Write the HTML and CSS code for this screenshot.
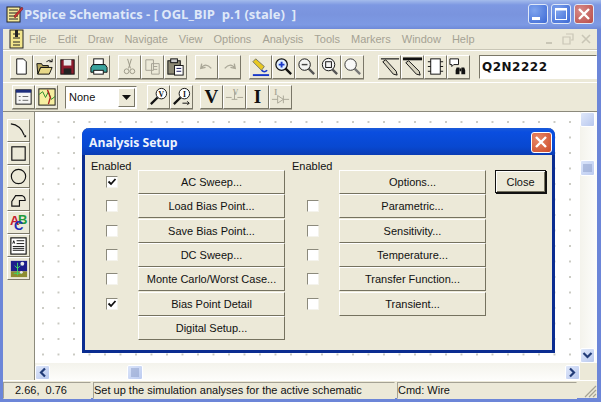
FILE: index.html
```html
<!DOCTYPE html>
<html lang="en">
<head>
    <meta charset="UTF-8">
    <meta name="viewport" content="width=device-width, initial-scale=1.0">
    <title>PSpice Schematics</title>
    <link rel="stylesheet" href="styles.css">
</head>
<body>
    <div class="window">
        <!-- title bar -->
        <div class="titlebar">
            <svg class="app-icon" width="18" height="18" viewBox="0 0 18 18"><rect x="1" y="2" width="13" height="15" fill="#f3e79a" stroke="#222"/><path d="M3 5h9M3 8h9M3 11h9M3 14h9" stroke="#222"/><path d="M8 11l8-9 1 2-8 9z" fill="#c33" stroke="#611" stroke-width=".5"/></svg>
            <div class="title-text">PSpice Schematics - [ OGL_BIP  p.1 (stale)  ]</div>
            <div class="win-btn"><svg width="20" height="20" viewBox="0 0 20 20"><rect x="4" y="13" width="8" height="3" fill="#fff"/></svg></div>
            <div class="win-btn"><svg width="20" height="20" viewBox="0 0 20 20"><rect x="4.500" y="4.500" width="11" height="11" fill="none" stroke="#fff"/><rect x="4" y="4" width="12" height="2.500" fill="#fff"/></svg></div>
            <div class="win-btn close"><svg width="20" height="20" viewBox="0 0 20 20"><path d="M5 5l10 10M15 5L5 15" stroke="#fff" stroke-width="2.400"/></svg></div>
        </div>

        <!-- menu -->
        <div class="menubar">
            <svg class="doc-icon" width="18" height="20" viewBox="0 0 18 20"><rect x="2" y="1" width="13" height="18" fill="#f3e68c" stroke="#222"/><path d="M5 5h7M5 9h7M5 13h7M5 16h7" stroke="#222"/><rect x="7" y="1" width="3" height="7" fill="#222"/></svg>
            <span class="menu">File</span>
            <span class="menu">Edit</span>
            <span class="menu">Draw</span>
            <span class="menu">Navigate</span>
            <span class="menu">View</span>
            <span class="menu">Options</span>
            <span class="menu">Analysis</span>
            <span class="menu">Tools</span>
            <span class="menu">Markers</span>
            <span class="menu">Window</span>
            <span class="menu">Help</span>
            <div class="mdi-btns">
                <svg width="14" height="14" viewBox="0 0 14 14"><path d="M3 11h6" stroke="#c9c6b6" stroke-width="2"/></svg>
                <svg width="14" height="14" viewBox="0 0 14 14"><path d="M5 2h7v6h-2M2 5h7v7H2z" fill="none" stroke="#c9c6b6" stroke-width="1.200"/></svg>
                <svg width="14" height="14" viewBox="0 0 14 14"><path d="M3 3l8 8M11 3l-8 8" stroke="#c9c6b6" stroke-width="1.600"/></svg>
            </div>
        </div>

        <!-- main toolbar -->
        <div class="toolbar top">
            <div class="tool first"><svg viewBox="0 0 22 22"><path d="M6 3h7l3 3v13H6z" fill="#fff" stroke="#111"/></svg></div>
            <div class="tool"><svg viewBox="0 0 22 22"><path d="M3 8h5l1 2h6v2H7l-3 7z" fill="#b8a860" stroke="#111"/><path d="M4 19l3-7h12l-3 7z" fill="#e8d888" stroke="#111"/><path d="M13 6q3-3 6 0M19 3v3h-3" fill="none" stroke="#111"/></svg></div>
            <div class="tool"><svg viewBox="0 0 22 22"><rect x="4" y="4" width="14" height="15" fill="#8c1c2c" stroke="#111"/><rect x="7" y="4" width="8" height="6" fill="#e8e8e8"/><rect x="7" y="13" width="8" height="6" fill="#222"/></svg></div>
            <div class="tool sep"><svg viewBox="0 0 22 22"><rect x="6" y="3" width="10" height="6" fill="#fff" stroke="#111"/><path d="M5 9h13l2 3v5H3v-5z" fill="#3aa39c" stroke="#111"/><rect x="6" y="15" width="10" height="4" fill="#fff" stroke="#111"/></svg></div>
            <div class="tool sep"><svg viewBox="0 0 22 22"><path d="M9 3l3 10M13 3l-3 10" stroke="#9a9786"/><circle cx="8" cy="16" r="2.500" fill="none" stroke="#9a9786"/><circle cx="14" cy="16" r="2.500" fill="none" stroke="#9a9786"/></svg></div>
            <div class="tool"><svg viewBox="0 0 22 22"><path d="M4 4h8v11H4zM10 8h8v11h-8z" fill="#ece9d8" stroke="#a5a294"/><path d="M12 11h4M12 14h4" stroke="#a5a294"/></svg></div>
            <div class="tool"><svg viewBox="0 0 22 22"><rect x="3" y="5" width="13" height="14" fill="#8c8874" stroke="#111"/><rect x="6" y="3" width="7" height="4" fill="#ccc" stroke="#111"/><rect x="10" y="10" width="9" height="10" fill="#fff" stroke="#111"/><path d="M12 13h5M12 16h5" stroke="#115"/></svg></div>
            <div class="tool sep"><svg viewBox="0 0 22 22"><path d="M6 8l-1 5 5-1M5 13q5-7 11 0" fill="none" stroke="#aaa797" stroke-width="1.400"/></svg></div>
            <div class="tool"><svg viewBox="0 0 22 22"><path d="M16 8l1 5-5-1M17 13q-5-7-11 0" fill="none" stroke="#aaa797" stroke-width="1.400"/></svg></div>
            <div class="tool sep"><svg viewBox="0 0 22 22"><path d="M3 6l3-3 9 8-3 4z" fill="#e8c820" stroke="#776"/><path d="M12 15q3 3 6 0" stroke="#1838c8" fill="none" stroke-width="1.600"/><path d="M3 20h17" stroke="#1838c8" stroke-width="2"/></svg></div>
            <div class="tool"><svg viewBox="0 0 22 22"><circle cx="9" cy="9" r="6" fill="#dfeeff" stroke="#111" stroke-width="1.300"/><path d="M6 9h6M9 6v6" stroke="#1838c8" stroke-width="2"/><path d="M13 13l6 6" stroke="#111" stroke-width="2.400"/></svg></div>
            <div class="tool"><svg viewBox="0 0 22 22"><circle cx="9" cy="9" r="6" fill="#f4f4f4" stroke="#111"/><path d="M6 9h6" stroke="#444" stroke-width="1.500"/><path d="M13 13l6 6" stroke="#555" stroke-width="2.400"/></svg></div>
            <div class="tool"><svg viewBox="0 0 22 22"><circle cx="10" cy="9" r="6.500" fill="#f4f4f4" stroke="#111"/><rect x="7" y="6" width="6" height="6" fill="none" stroke="#111"/><path d="M14 14l5 5" stroke="#555" stroke-width="2.400"/></svg></div>
            <div class="tool"><svg viewBox="0 0 22 22"><circle cx="9" cy="9" r="6" fill="#f8f8f8" stroke="#333"/><path d="M13 13l6 6" stroke="#777" stroke-width="2.400"/></svg></div>
            <div class="tool sep wide-sep"><svg viewBox="0 0 22 22"><path d="M2 3h19" stroke="#111" stroke-width="1.200"/><path d="M4 6l3-2 11 12 1 4-4-1z" fill="#d8d4c0" stroke="#111"/></svg></div>
            <div class="tool"><svg viewBox="0 0 22 22"><path d="M1 3h20" stroke="#111" stroke-width="3"/><path d="M4 7l3-2 11 11 1 4-4-1z" fill="#d8d4c0" stroke="#111"/></svg></div>
            <div class="tool"><svg viewBox="0 0 22 22"><rect x="6" y="3" width="10" height="16" fill="#fff" stroke="#111"/><path d="M3 6h3M3 11h3M3 16h3M16 6h3M16 11h3M16 16h3" stroke="#111"/></svg></div>
            <div class="tool"><svg viewBox="0 0 22 22"><path d="M2 3h9v6H6l-2 2V9H2z" fill="#fff" stroke="#111"/><path d="M9 12h3v7H8v-4zM14 12h3l1 3v4h-4z" fill="#111"/><rect x="12" y="13" width="2" height="3" fill="#111"/></svg></div>
            <input class="part-box" value="Q2N2222">
        </div>

        <!-- second toolbar -->
        <div class="toolbar bottom">
            <div class="tool first2"><svg viewBox="0 0 22 22"><rect x="3" y="4" width="16" height="15" fill="#f4f4f4" stroke="#111"/><rect x="3" y="4" width="16" height="3" fill="#1c2c7c"/><path d="M6 11h2M10 11h6M6 15h2M10 15h6" stroke="#666"/></svg></div>
            <div class="tool"><svg viewBox="0 0 22 22"><rect x="3" y="3" width="17" height="17" fill="#f6eea0" stroke="#111"/><path d="M3 9l4-3 3 6 3-6 3 8 4-3" fill="none" stroke="#2a8a2a"/><path d="M12 4l3 8-2 7" fill="none" stroke="#b02020" stroke-width="1.400"/></svg></div>
            <div class="select-box"><span class="select-val">None</span><span class="select-arrow"><svg width="9" height="5" viewBox="0 0 9 5"><path d="M0 0h9L4.500 5z" fill="#111"/></svg></span></div>
            <div class="tool"><svg viewBox="0 0 22 22"><circle cx="14" cy="8" r="5.500" fill="#fff" stroke="#111"/><text x="14" y="11" class="tool-mini">V</text><path d="M10 12l-7 7" stroke="#111" stroke-width="2.400"/></svg></div>
            <div class="tool"><svg viewBox="0 0 22 22"><circle cx="14" cy="8" r="5.500" fill="#fff" stroke="#111"/><text x="14" y="11" class="tool-mini">I</text><path d="M10 12l-7 7" stroke="#111" stroke-width="2.400"/><path d="M12 18h7M17 16l2 2-2 2" fill="none" stroke="#111"/></svg></div>
            <div class="tool gap7"><svg viewBox="0 0 22 22"><text x="11" y="18" class="tool-big">V</text></svg></div>
            <div class="tool"><svg viewBox="0 0 22 22"><text x="12" y="9" class="tool-small">V</text><path d="M2 12h6M11 6v8M8 14h6M14 12h6" fill="none" stroke="#aaa797"/></svg></div>
            <div class="tool"><svg viewBox="0 0 22 22"><text x="11" y="18" class="tool-big">I</text></svg></div>
            <div class="tool"><svg viewBox="0 0 22 22"><text x="6" y="9" class="tool-small">I</text><path d="M2 14h6M14 14h6M8 10v8l6-4zM14 10v8" fill="none" stroke="#aaa797"/></svg></div>
        </div>

        <!-- workspace -->
        <div class="workspace">
            <div class="toolbox">
                <div class="tool"><svg viewBox="0 0 22 22"><path d="M3 4q10 1 14 12" fill="none" stroke="#111" stroke-width="1.200"/><rect x="17" y="16" width="2" height="2" fill="#111"/></svg></div>
                <div class="tool"><svg viewBox="0 0 22 22"><rect x="4" y="4" width="14" height="14" fill="none" stroke="#111" stroke-width="1.200"/></svg></div>
                <div class="tool"><svg viewBox="0 0 22 22"><circle cx="11" cy="11" r="7.500" fill="none" stroke="#111" stroke-width="1.200"/></svg></div>
                <div class="tool"><svg viewBox="0 0 22 22"><path d="M4 18v-5l4-6h7q3 1 3 5h-6v6z" fill="none" stroke="#111" stroke-width="1.200"/></svg></div>
                <div class="tool abc"><span class="abc-a">A</span><span class="abc-b">B</span><span class="abc-c">C</span></div>
                <div class="tool"><svg viewBox="0 0 22 22"><rect x="3" y="3" width="16" height="17" fill="#fff" stroke="#111" stroke-width="1.200"/><path d="M9 6h8M9 9h8M5 12h12M5 14h12M5 16h12" stroke="#111"/><path d="M5 9l1-3 1 3" fill="none" stroke="#111"/></svg></div>
                <div class="tool"><svg viewBox="0 0 22 22"><rect x="3" y="3" width="17" height="11" fill="#1c1c8c"/><rect x="3" y="14" width="17" height="6" fill="#8c8c30"/><path d="M10 5v13M7 8l3 3 3-3M6 16h8" stroke="#3cd868" fill="none"/><circle cx="15" cy="6" r="2" fill="#e8e8e8"/><circle cx="14" cy="15" r="1.500" fill="#e8e8e8"/></svg></div>
            </div>

            <div class="canvas-area">
                <div class="canvas"></div>
                <div class="vscroll">
                    <div class="sb-btn"></div>
                    <div class="sb-track"><div class="vthumb"><svg width="9" height="8" viewBox="0 0 9 8"><path d="M0 1h9M0 3h9M0 5h9M0 7h9" stroke="#8a9cc8"/></svg></div></div>
                    <div class="sb-btn"><svg width="11" height="9" viewBox="0 0 11 9"><path d="M1.500 2l4 4 4-4" fill="none" stroke="#223c78" stroke-width="2.200"/></svg></div>
                </div>
                <div class="hscroll">
                    <div class="sb-btn"><svg width="9" height="11" viewBox="0 0 9 11"><path d="M7 1.500l-4 4 4 4" fill="none" stroke="#223c78" stroke-width="2.200"/></svg></div>
                    <div class="sb-track"><div class="hthumb"><svg width="8" height="9" viewBox="0 0 8 9"><path d="M1 0v9M3 0v9M5 0v9M7 0v9" stroke="#8a9cc8"/></svg></div></div>
                    <div class="sb-btn"><svg width="9" height="11" viewBox="0 0 9 11"><path d="M2 1.500l4 4-4 4" fill="none" stroke="#223c78" stroke-width="2.200"/></svg></div>
                </div>
                <div class="sb-corner"></div>
            </div>

            <!-- Analysis Setup dialog -->
            <div class="dialog">
                <div class="dlg-title">
                    <span>Analysis Setup</span>
                    <div class="dlg-close"><svg width="20" height="20" viewBox="0 0 20 20"><path d="M5 5l10 10M15 5L5 15" stroke="#fff" stroke-width="2.400"/></svg></div>
                </div>
                <div class="dlg-body">
                    <div class="dlg-col">
                        <div class="enabled">Enabled</div>
                        <div class="dlg-row"><span class="check"><svg width="10" height="10" viewBox="0 0 10 10"><path d="M1.500 4.500l2.500 2.500 4.500-5" fill="none" stroke="#111" stroke-width="1.800"/></svg></span><div class="btn">AC Sweep...</div></div>
                        <div class="dlg-row"><span class="check"></span><div class="btn">Load Bias Point...</div></div>
                        <div class="dlg-row"><span class="check"></span><div class="btn">Save Bias Point...</div></div>
                        <div class="dlg-row"><span class="check"></span><div class="btn">DC Sweep...</div></div>
                        <div class="dlg-row"><span class="check"></span><div class="btn">Monte Carlo/Worst Case...</div></div>
                        <div class="dlg-row"><span class="check"><svg width="10" height="10" viewBox="0 0 10 10"><path d="M1.500 4.500l2.500 2.500 4.500-5" fill="none" stroke="#111" stroke-width="1.800"/></svg></span><div class="btn">Bias Point Detail</div></div>
                        <div class="dlg-row"><span class="no-check"></span><div class="btn">Digital Setup...</div></div>
                    </div>
                    <div class="dlg-col">
                        <div class="enabled">Enabled</div>
                        <div class="dlg-row"><span class="no-check"></span><div class="btn">Options...</div></div>
                        <div class="dlg-row"><span class="check"></span><div class="btn">Parametric...</div></div>
                        <div class="dlg-row"><span class="check"></span><div class="btn">Sensitivity...</div></div>
                        <div class="dlg-row"><span class="check"></span><div class="btn">Temperature...</div></div>
                        <div class="dlg-row"><span class="check"></span><div class="btn">Transfer Function...</div></div>
                        <div class="dlg-row"><span class="check"></span><div class="btn">Transient...</div></div>
                    </div>
                    <div class="btn close-btn">Close</div>
                </div>
            </div>
        </div>

        <!-- status bar -->
        <div class="statusbar">
            <div class="pane coords">2.66,  0.76</div>
            <div class="pane msg">Set up the simulation analyses for the active schematic</div>
            <div class="pane cmd">Cmd: Wire</div>
            <div class="grip"><svg width="16" height="16" viewBox="0 0 16 16"><path d="M15 4L4 15M15 8l-7 7M15 12l-3 3" stroke="#a5a294" stroke-width="1.200"/></svg></div>
        </div>
    </div>
</body>
</html>
```

FILE: styles.css
```css
* {
    margin: 0;
    padding: 0;
    box-sizing: border-box;
}

body {
    width: 601px;
    height: 402px;
    overflow: hidden;
    font-family: "Liberation Sans", Arial, sans-serif;
    font-size: 11px;
    color: #111;
}

.window {
    width: 601px;
    height: 402px;
    display: flex;
    flex-direction: column;
    background: #ece9d8;
    border-left: 3px solid #6c86d8;
    border-right: 4px solid #6c86d8;
    border-bottom: 4px solid #6c86d8;
}

/* title bar */
.titlebar {
    flex: none;
    height: 29px;
    margin: 0 -4px 0 -3px;
    padding: 0 7px 2px 6px;
    display: flex;
    align-items: center;
    background: linear-gradient(to bottom, #a4bcec 0, #7d98e2 5px, #7a94de 50%, #7d9ae4 85%, #6f8ad8 100%);
}

.app-icon {
    flex: none;
}

.title-text {
    flex: 1;
    white-space: pre;
    font-family: "Open Sans", sans-serif;
    font-weight: 700;
    font-size: 13px;
    color: #dfe8f8;
}

.win-btn {
    width: 20px;
    height: 20px;
    margin-left: 3px;
    border: 1px solid #dfe8f8;
    border-radius: 3px;
    background: radial-gradient(circle at 30% 30%, #7fa4ee, #3c68d4);
}

.win-btn.close {
    background: radial-gradient(circle at 30% 30%, #d88a88, #b84c48);
}

.win-btn svg, .dlg-close svg {
    display: block;
    margin: -1px;
}

/* menu */
.menubar {
    flex: none;
    height: 21px;
    padding-left: 5px;
    display: flex;
    align-items: center;
    gap: 11px;
    border-bottom: 1px solid #c9c6b6;
}

.doc-icon {
    margin-right: -8px;
}

.menu {
    color: #a5a294;
    font-size: 11px;
}

.mdi-btns {
    margin-left: auto;
    margin-right: 4px;
    display: flex;
    gap: 4px;
}

/* toolbars */
.toolbar {
    flex: none;
    display: flex;
    align-items: center;
    border-top: 1px solid #fff;
}

.toolbar.top {
    height: 32px;
    padding-left: 7px;
}

.toolbar.bottom {
    height: 30px;
    padding-left: 9px;
    border-bottom: 1px solid #8c8a7c;
}

.tool {
    flex: none;
    width: 23px;
    height: 24px;
    background: #ece9d8;
    border: 1px solid;
    border-color: #fff #7a7768 #7a7768 #fff;
    box-shadow: 0 1px 0 #b0ad9e;
}

.tool svg {
    display: block;
    width: 21px;
    height: 21px;
}

.tool.sep {
    margin-left: 8px;
}

.tool.wide-sep {
    margin-left: 14px;
}

.tool-mini, .tool-small, .tool-big {
    font-family: "Liberation Serif", serif;
    font-weight: 700;
    text-anchor: middle;
}

.tool-mini {
    font-size: 8px;
    fill: #111;
}

.tool-small {
    font-size: 8px;
    fill: #aaa797;
}

.tool-big {
    font-size: 20px;
    fill: #111;
}

.part-box {
    flex: none;
    width: 118px;
    height: 24px;
    margin-left: 9px;
    padding-left: 2px;
    border: 1px solid;
    border-color: #7a7768 #fff #fff #7a7768;
    font-family: "DejaVu Sans", sans-serif;
    font-weight: 700;
    font-size: 12px;
    letter-spacing: .5px;
    color: #111;
}

.select-box {
    flex: none;
    width: 72px;
    height: 23px;
    margin-left: 7px;
    margin-right: 10px;
    padding: 1px;
    display: flex;
    background: #fff;
    border: 1px solid;
    border-color: #7a7768 #fff #fff #7a7768;
}

.select-val {
    flex: 1;
    padding: 3px 2px;
    font-size: 11px;
}

.select-arrow {
    width: 17px;
    display: flex;
    align-items: center;
    justify-content: center;
    background: #ece9d8;
    border: 1px solid;
    border-color: #fff #7a7768 #7a7768 #fff;
}

.tool.gap7 {
    margin-left: 7px;
}

/* workspace */
.workspace {
    flex: 1;
    position: relative;
    display: flex;
    min-height: 0;
}

.toolbox {
    flex: none;
    width: 32px;
    padding: 7px 0 0 4px;
    display: flex;
    flex-direction: column;
    border-right: 1px solid #8c8a7c;
}

.toolbox .tool {
    height: 23px;
    box-shadow: none;
}

.abc {
    position: relative;
    font-weight: 700;
    font-size: 13px;
}

.abc-a, .abc-b, .abc-c {
    position: absolute;
}

.abc-a {
    left: 2px;
    top: 1px;
    color: #c8202c;
}

.abc-b {
    left: 10px;
    top: 0;
    color: #209a3c;
}

.abc-c {
    left: 6px;
    top: 6px;
    color: #1c2cb8;
}

.canvas-area {
    flex: 1;
    display: grid;
    grid-template-columns: 1fr 17px;
    grid-template-rows: 1fr 17px;
    min-width: 0;
}

.canvas {
    background-color: #fff;
    background-image: radial-gradient(circle at 1px 1px, #c8c8c0 0, #c8c8c0 .7px, transparent 1px);
    background-size: 15.500px 15.500px;
    background-position: 7px 9px;
}

.vscroll, .hscroll {
    display: flex;
    background: linear-gradient(to right, #f4f3ec, #fdfdfb);
}

.vscroll {
    flex-direction: column;
}

.hscroll {
    background: linear-gradient(to bottom, #f4f3ec, #fdfdfb);
    padding-top: 2px;
}

.sb-btn {
    flex: none;
    width: 15px;
    height: 15px;
    display: flex;
    align-items: center;
    justify-content: center;
    background: linear-gradient(135deg, #e0e8fa, #b8c8ee);
    border: 1px solid #fff;
    border-radius: 2px;
}

.sb-track {
    flex: 1;
    position: relative;
}

.vthumb {
    position: absolute;
    left: 0;
    top: 33px;
    width: 15px;
    height: 16px;
}

.hthumb {
    position: absolute;
    left: 77px;
    top: 0;
    width: 16px;
    height: 15px;
}

.vthumb, .hthumb {
    display: flex;
    align-items: center;
    justify-content: center;
    background: linear-gradient(135deg, #dbe5fa, #bccbf0);
    border: 1px solid #fff;
    border-radius: 2px;
}

.sb-corner {
    background: #ece9d8;
}

/* dialog */
.dialog {
    position: absolute;
    left: 79px;
    top: 16px;
    width: 473px;
    height: 225px;
    display: flex;
    flex-direction: column;
    background: #ece9d8;
    border: 3px solid #0a2c90;
    border-top: 0;
    border-radius: 7px 7px 0 0;
}

.dlg-title {
    flex: none;
    height: 27px;
    margin: 0 -3px;
    padding: 2px 3px 0 7px;
    display: flex;
    align-items: center;
    justify-content: space-between;
    border-radius: 7px 7px 0 0;
    background: linear-gradient(to bottom, #1a5ad8 0, #0a4ee0 4px, #0848d0 70%, #0a3cb4 100%);
    font-family: "Open Sans", sans-serif;
    font-weight: 700;
    font-size: 12.200px;
    color: #eef3fc;
}

.dlg-close {
    width: 21px;
    height: 21px;
    border: 1px solid #fff;
    border-radius: 3px;
    background: radial-gradient(circle at 30% 30%, #e88868, #cc4a28);
}

.dlg-body {
    flex: 1;
    padding: 5px 0 0 6px;
    display: flex;
}

.dlg-col {
    width: 201px;
    display: flex;
    flex-direction: column;
}

.enabled {
    height: 10px;
    font-size: 11px;
    line-height: 13px;
}

.dlg-row {
    height: 24.300px;
    display: flex;
    align-items: center;
}

.check, .no-check {
    flex: none;
    width: 12px;
    height: 12px;
    margin: 0 20px 0 15px;
}

.check {
    display: flex;
    align-items: center;
    justify-content: center;
    background: #fff;
    border: 1px solid;
    border-color: #8c8a7c #f4f3ec #f4f3ec #8c8a7c;
}

.btn {
    flex: none;
    width: 147px;
    height: 24px;
    display: flex;
    align-items: center;
    justify-content: center;
    font-size: 11px;
    background: #ece9d8;
    border: 1px solid;
    border-color: #fff #75725f #75725f #fff;
}

.close-btn {
    width: 51px;
    height: 23px;
    margin-top: 10px;
    margin-left: 2px;
    border-color: #111;
    box-shadow: inset 1px 1px 0 #fff, inset -1px -1px 0 #75725f, 1px 1px 0 #111;
}

/* status bar */
.statusbar {
    flex: none;
    height: 18px;
    padding-top: 1px;
    display: flex;
    gap: 2px;
    border-top: 1px solid #fff;
}

.pane {
    height: 17px;
    line-height: 15px;
    border: 1px solid;
    border-top-color: #a5a294;
    border-left-color: #a5a294;
    border-right-color: #ece9d8;
    border-bottom-color: #ece9d8;
    white-space: pre;
    font-size: 11px;
}

.coords {
    width: 88px;
    padding-left: 11px;
}

.msg {
    width: 302px;
}

.cmd {
    width: 180px;
}

.grip {
    flex: 1;
    display: flex;
    align-items: flex-end;
    justify-content: flex-end;
}
```
